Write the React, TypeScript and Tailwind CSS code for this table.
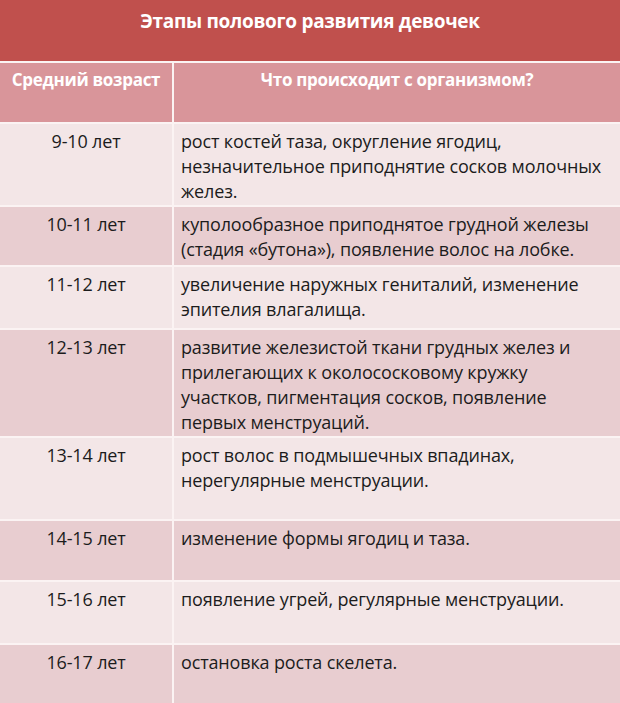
const rows = [
  {
    age: "9-10 лет",
    h: "h-[81px]",
    dark: false,
    lines: [
      "рост костей таза, округление ягодиц,",
      "незначительное приподнятие сосков молочных",
      "желез.",
    ],
  },
  {
    age: "10-11 лет",
    h: "h-[58px]",
    dark: true,
    lines: [
      "куполообразное приподнятое грудной железы",
      "(стадия «бутона»), появление волос на лобке.",
    ],
  },
  {
    age: "11-12 лет",
    h: "h-[61px]",
    dark: false,
    lines: ["увеличение наружных гениталий, изменение", "эпителия влагалища."],
  },
  {
    age: "12-13 лет",
    h: "h-[106px]",
    dark: true,
    lines: [
      "развитие железистой ткани грудных желез и",
      "прилегающих к околососковому кружку",
      "участков, пигментация сосков, появление",
      "первых менструаций.",
    ],
  },
  {
    age: "13-14 лет",
    h: "h-[81px]",
    dark: false,
    lines: ["рост волос в подмышечных впадинах,", "нерегулярные менструации."],
  },
  {
    age: "14-15 лет",
    h: "h-[59px]",
    dark: true,
    lines: ["изменение формы ягодиц и таза."],
  },
  {
    age: "15-16 лет",
    h: "h-[61px]",
    dark: false,
    lines: ["появление угрей, регулярные менструации."],
  },
  {
    age: "16-17 лет",
    h: "h-[60px]",
    dark: true,
    lines: ["остановка роста скелета."],
  },
];

export default function App() {
  return (
    <div className="w-[620px] h-[703px] overflow-hidden bg-[#fbf3f3] font-['Open_Sans',sans-serif]">
      <div className="h-[61px] bg-[#c0504d] pt-[7px] text-center text-[19px] font-bold text-white tracking-[-0.3px]">
        Этапы полового развития девочек
      </div>
      <div className="mt-[2px] flex flex-col gap-[2px]">
        <div className="grid h-[59px] grid-cols-[172px_1fr] gap-[2px] text-[17px] font-bold text-white tracking-[-0.3px]">
          <div className="bg-[#d9959a] pt-[4px] text-center">Средний возраст</div>
          <div className="bg-[#d9959a] pt-[4px] text-center">
            Что происходит с организмом?
          </div>
        </div>
        {rows.map((r) => (
          <div
            key={r.age}
            className={`grid ${r.h} grid-cols-[172px_1fr] gap-[2px] text-[18px] leading-[25px] tracking-[-0.15px] text-[#1c1c1c]`}
          >
            <div
              className={`${r.dark ? "bg-[#e8cdd0]" : "bg-[#f3e6e7]"} pt-[5px] text-center`}
            >
              {r.age}
            </div>
            <div
              className={`${r.dark ? "bg-[#e8cdd0]" : "bg-[#f3e6e7]"} pl-[7px] pt-[5px]`}
            >
              {r.lines.map((l) => (
                <div key={l} className="whitespace-nowrap">
                  {l}
                </div>
              ))}
            </div>
          </div>
        ))}
      </div>
    </div>
  );
}
